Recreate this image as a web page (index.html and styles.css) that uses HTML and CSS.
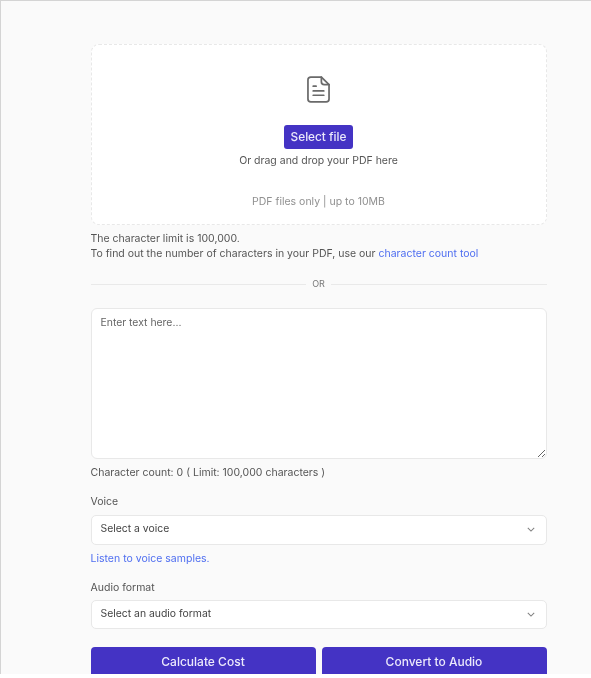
FILE: index.html
```html
<!DOCTYPE html>
<html lang="en">
<head>
<meta charset="utf-8">
<title>PDF to Audio</title>
<link rel="stylesheet" href="styles.css">
</head>
<body>
<main class="page">
  <section class="drop">
    <svg class="doc" viewBox="0 0 24 28" width="23" height="27" fill="none" stroke="#6a6a6a" stroke-width="1.8" stroke-linecap="round" stroke-linejoin="round">
      <path d="M15 1H4a3 3 0 0 0-3 3v20a3 3 0 0 0 3 3h16a3 3 0 0 0 3-3V9z"/>
      <path d="M15 1v5a3 3 0 0 0 3 3h5"/>
      <path d="M6.500 10.500h3M6.500 15.500h11M6.500 20h11"/>
    </svg>
    <button class="btn select">Select file</button>
    <p class="drag">Or drag and drop your PDF here</p>
    <p class="hint">PDF files only | up to 10MB</p>
  </section>
  <p class="note">The character limit is 100,000.<br>To find out the number of characters in your PDF, use our <a href="#">character count tool</a></p>
  <div class="or"><span>OR</span></div>
  <textarea class="text" placeholder="Enter text here..."></textarea>
  <p class="count">Character count: 0 ( Limit: 100,000 characters )</p>
  <label class="label voice">Voice</label>
  <div class="select-box"><span>Select a voice</span><svg viewBox="0 0 10 6" width="8" height="5" fill="none" stroke="#808080" stroke-width="1.300"><path d="M1 1l4 4 4-4"/></svg></div>
  <a class="samples" href="#">Listen to voice samples.</a>
  <label class="label format">Audio format</label>
  <div class="select-box"><span>Select an audio format</span><svg viewBox="0 0 10 6" width="8" height="5" fill="none" stroke="#808080" stroke-width="1.300"><path d="M1 1l4 4 4-4"/></svg></div>
  <div class="actions">
    <button class="btn big">Calculate Cost</button>
    <button class="btn big">Convert to Audio</button>
  </div>
</main>
</body>
</html>
```
FILE: styles.css
```css
* { box-sizing: border-box; }
html, body { margin: 0; height: 100%; overflow: hidden; background: #fff; }
body { font-family: Inter, "Liberation Sans", sans-serif; font-size: 10.500px; color: #555; }
.page { height: 674px; background: #fafafa; border-top: 1px solid #d4d4d4; border-left: 1px solid #d4d4d4; padding: 43px 44.500px 0 89.500px; overflow: hidden; filter: blur(0.45px); }
.drop { height: 181px; background: #fff; border: 1px dashed #e8e8e8; border-radius: 8px; display: flex; flex-direction: column; align-items: center; padding-top: 31px; }
.doc { display: block; }
.btn { background: #4433c4; color: #ebe9fb; border: 0; font-family: inherit; font-weight: 500; cursor: pointer; padding: 0; }
.select { margin-top: 22px; height: 24px; width: 69px; border-radius: 3px; font-size: 11.800px; }
.drag { margin: 4px 0 0; line-height: 16px; color: #555; }
.hint { margin: 25px 0 0; line-height: 16px; color: #909090; }
.note { margin: 7px 0 0; line-height: 14.500px; color: #555; }
a { color: #4f6ef0; text-decoration: none; }
.or { margin-top: 16px; display: flex; align-items: center; gap: 6px; color: #777; font-size: 9px; line-height: 14px; }
.or::before, .or::after { content: ""; flex: 1; border-top: 1px solid #e9e9e9; }
.text { display: block; width: 100%; height: 151px; margin-top: 17px; border: 1px solid #e8e8e8; border-radius: 6px; background: #fff; padding: 7px 9px; font-family: inherit; font-size: 10.400px; resize: vertical; outline: none; }
.text::placeholder { color: #666; opacity: 1; }
.count { margin: 5.500px 0 0; line-height: 15px; color: #555; }
.label { display: block; line-height: 15px; color: #555; }
.voice { margin-top: 14.500px; padding-bottom: 1px; }
.format { margin-top: 14px; }
.select-box { margin-top: 5px; height: 29.500px; background: #fff; border: 1px solid #e8e8e8; border-radius: 5px; padding: 0 11px 0 9px; display: flex; align-items: center; justify-content: space-between; color: #444; font-size: 10.400px; }
.select-box span { margin-bottom: 2px; }
.samples { display: block; margin-top: 6px; line-height: 15px; }
.actions { margin-top: 18px; display: flex; gap: 6px; }
.big { flex: 1; height: 30px; border-radius: 4px 4px 0 0; font-size: 12px; padding-bottom: 2px; }
```
